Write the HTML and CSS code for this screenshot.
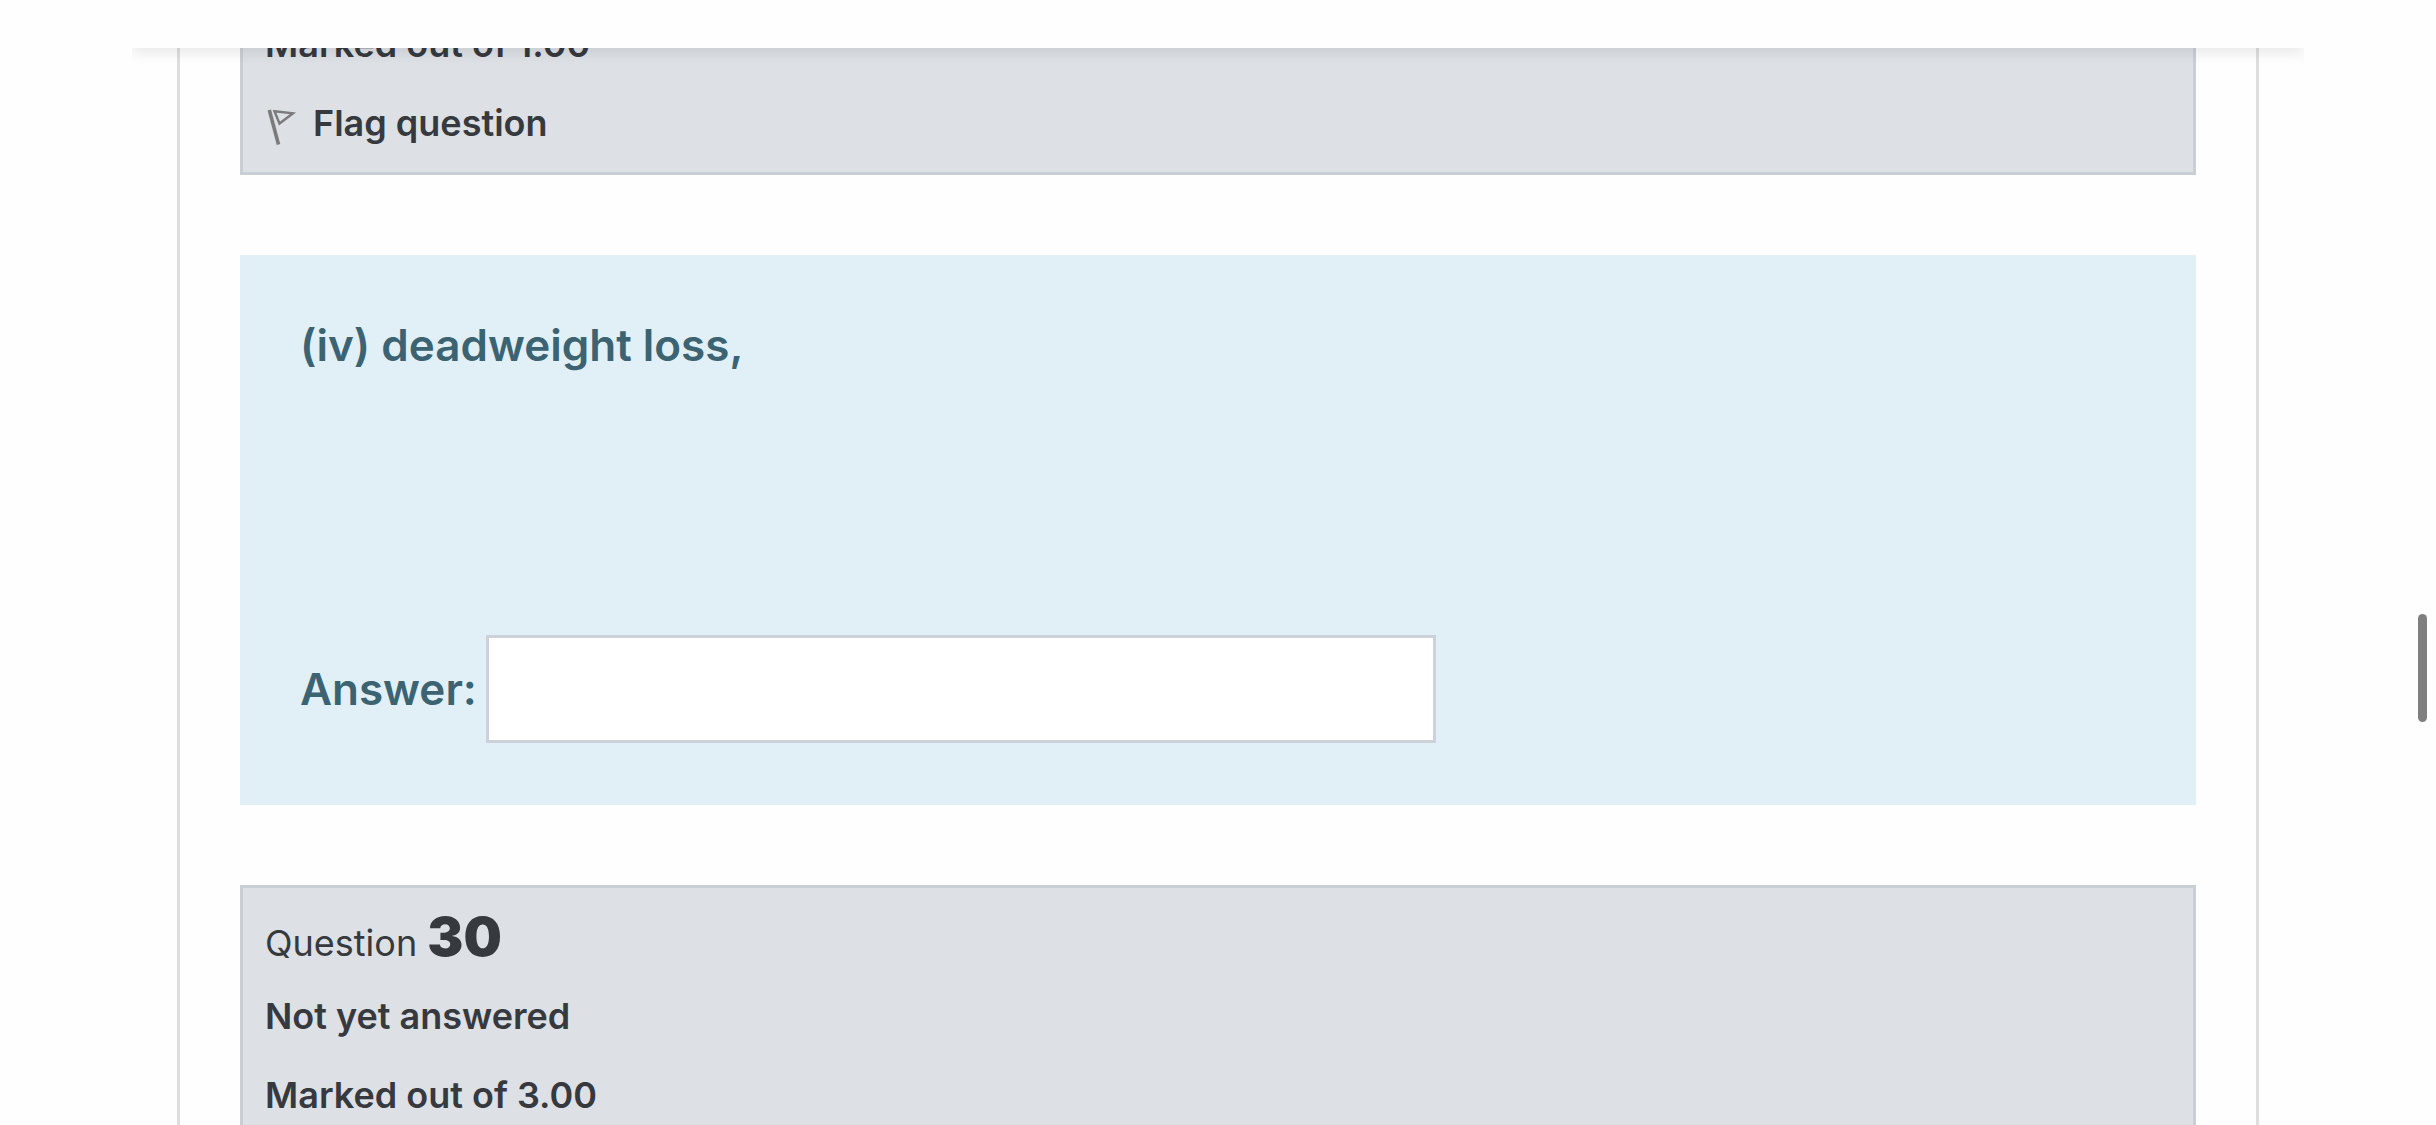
FILE: index.html
```
<!DOCTYPE html>
<html lang="en">
<head>
    <meta charset="UTF-8">
    <meta name="viewport" content="width=device-width, initial-scale=1.0">
    <title>Quiz</title>
    <link rel="stylesheet" href="styles.css">
</head>
<body>

    <header class="top-bar"></header>

    <main class="quiz">
        <!-- Question 29 -->
        <section class="info info-first">
            <div class="grade">Marked out of 1.00</div>
            <a class="flag" href="#">
                <svg class="flag-icon" viewBox="0 0 32 44" aria-hidden="true">
                    <path d="M4.300 9L13.500 43.500" fill="none" stroke="#7b7b7b" stroke-width="3.6"/>
                    <path d="M9.500 10.300L28 12.300L14.500 22.500Z" fill="none" stroke="#7b7b7b" stroke-width="2.4"/>
                </svg>
                <span>Flag question</span>
            </a>
        </section>

        <section class="formulation">
            <p class="qtext">(iv) deadweight loss,</p>
            <div class="answer-row">
                <label for="answer">Answer:</label>
                <input type="text" id="answer" class="answer-input">
            </div>
        </section>

        <!-- Question 30 -->
        <section class="info info-last">
            <h3 class="number">Question <span class="qno">30</span></h3>
            <div class="state">Not yet answered</div>
            <div class="grade">Marked out of 3.00</div>
        </section>
    </main>

    <div class="scroll-thumb"></div>

</body>
</html>
```
FILE: styles.css
```
* {
    box-sizing: border-box;
}
body {
    margin: 0;
    background-color: #fefefe;
    color: #373a3c;
    font-family: Inter, "Liberation Sans", sans-serif;
    font-size: 44px;
    line-height: 66px;
}
.top-bar {
    position: fixed;
    top: 0;
    left: 132px;
    right: 132px;
    z-index: 10;
    height: 48px;
    background-color: #fefefe;
    box-shadow: 0 6px 12px rgba(0, 0, 0, 0.08);
    /* keep the shadow inside the bar's sides */
    clip-path: inset(0 0 -24px 0);
}
.quiz {
    display: flex;
    flex-direction: column;
    gap: 80px;
    min-height: 100vh;
    margin: 0 177px;
    padding: 0 60px;
    border: solid #dedede;
    border-width: 0 3px;
}

/* Question info boxes */
.info {
    display: flex;
    flex-direction: column;
    gap: 25px;
    padding: 22px;
    background-color: #dde0e5;
    border: 3px solid #cacfd6;
    color: #36393d;
    font-size: 36px;
    font-weight: 600;
    line-height: 54px;
}
.info-first {
    padding-top: 17px;
    border-top: 0;
}
.info-last {
    flex: 1;
    padding-bottom: 0;
    border-bottom: 0;
}
.number {
    margin: 0 0 -6px;
    font-size: 36px;
    font-weight: 400;
}
.qno {
    font-size: 54px;
    font-weight: 900;
}
.flag {
    display: flex;
    align-items: center;
    gap: 16px;
    color: inherit;
    text-decoration: none;
}
.flag-icon {
    width: 32px;
    height: 44px;
}

/* Question text and answer */
.formulation {
    display: flex;
    flex-direction: column;
    gap: 257px;
    padding: 57px 60px 62px;
    background-color: #e1f0f7;
    color: #3c6372;
    font-weight: 600;
}
.qtext {
    margin: 0;
}
.answer-row {
    display: flex;
    align-items: center;
    gap: 9px;
}
.answer-input {
    width: 39vw;
    height: 108px;
    padding: 0 36px;
    background-color: #fff;
    border: 3px solid #cdd1d9;
    border-radius: 0;
    color: #36393d;
    font: inherit;
}

.scroll-thumb {
    position: fixed;
    top: 614px;
    right: 9px;
    width: 9px;
    height: 108px;
    border-radius: 5px;
    background-color: #7f7f7f;
}
```
